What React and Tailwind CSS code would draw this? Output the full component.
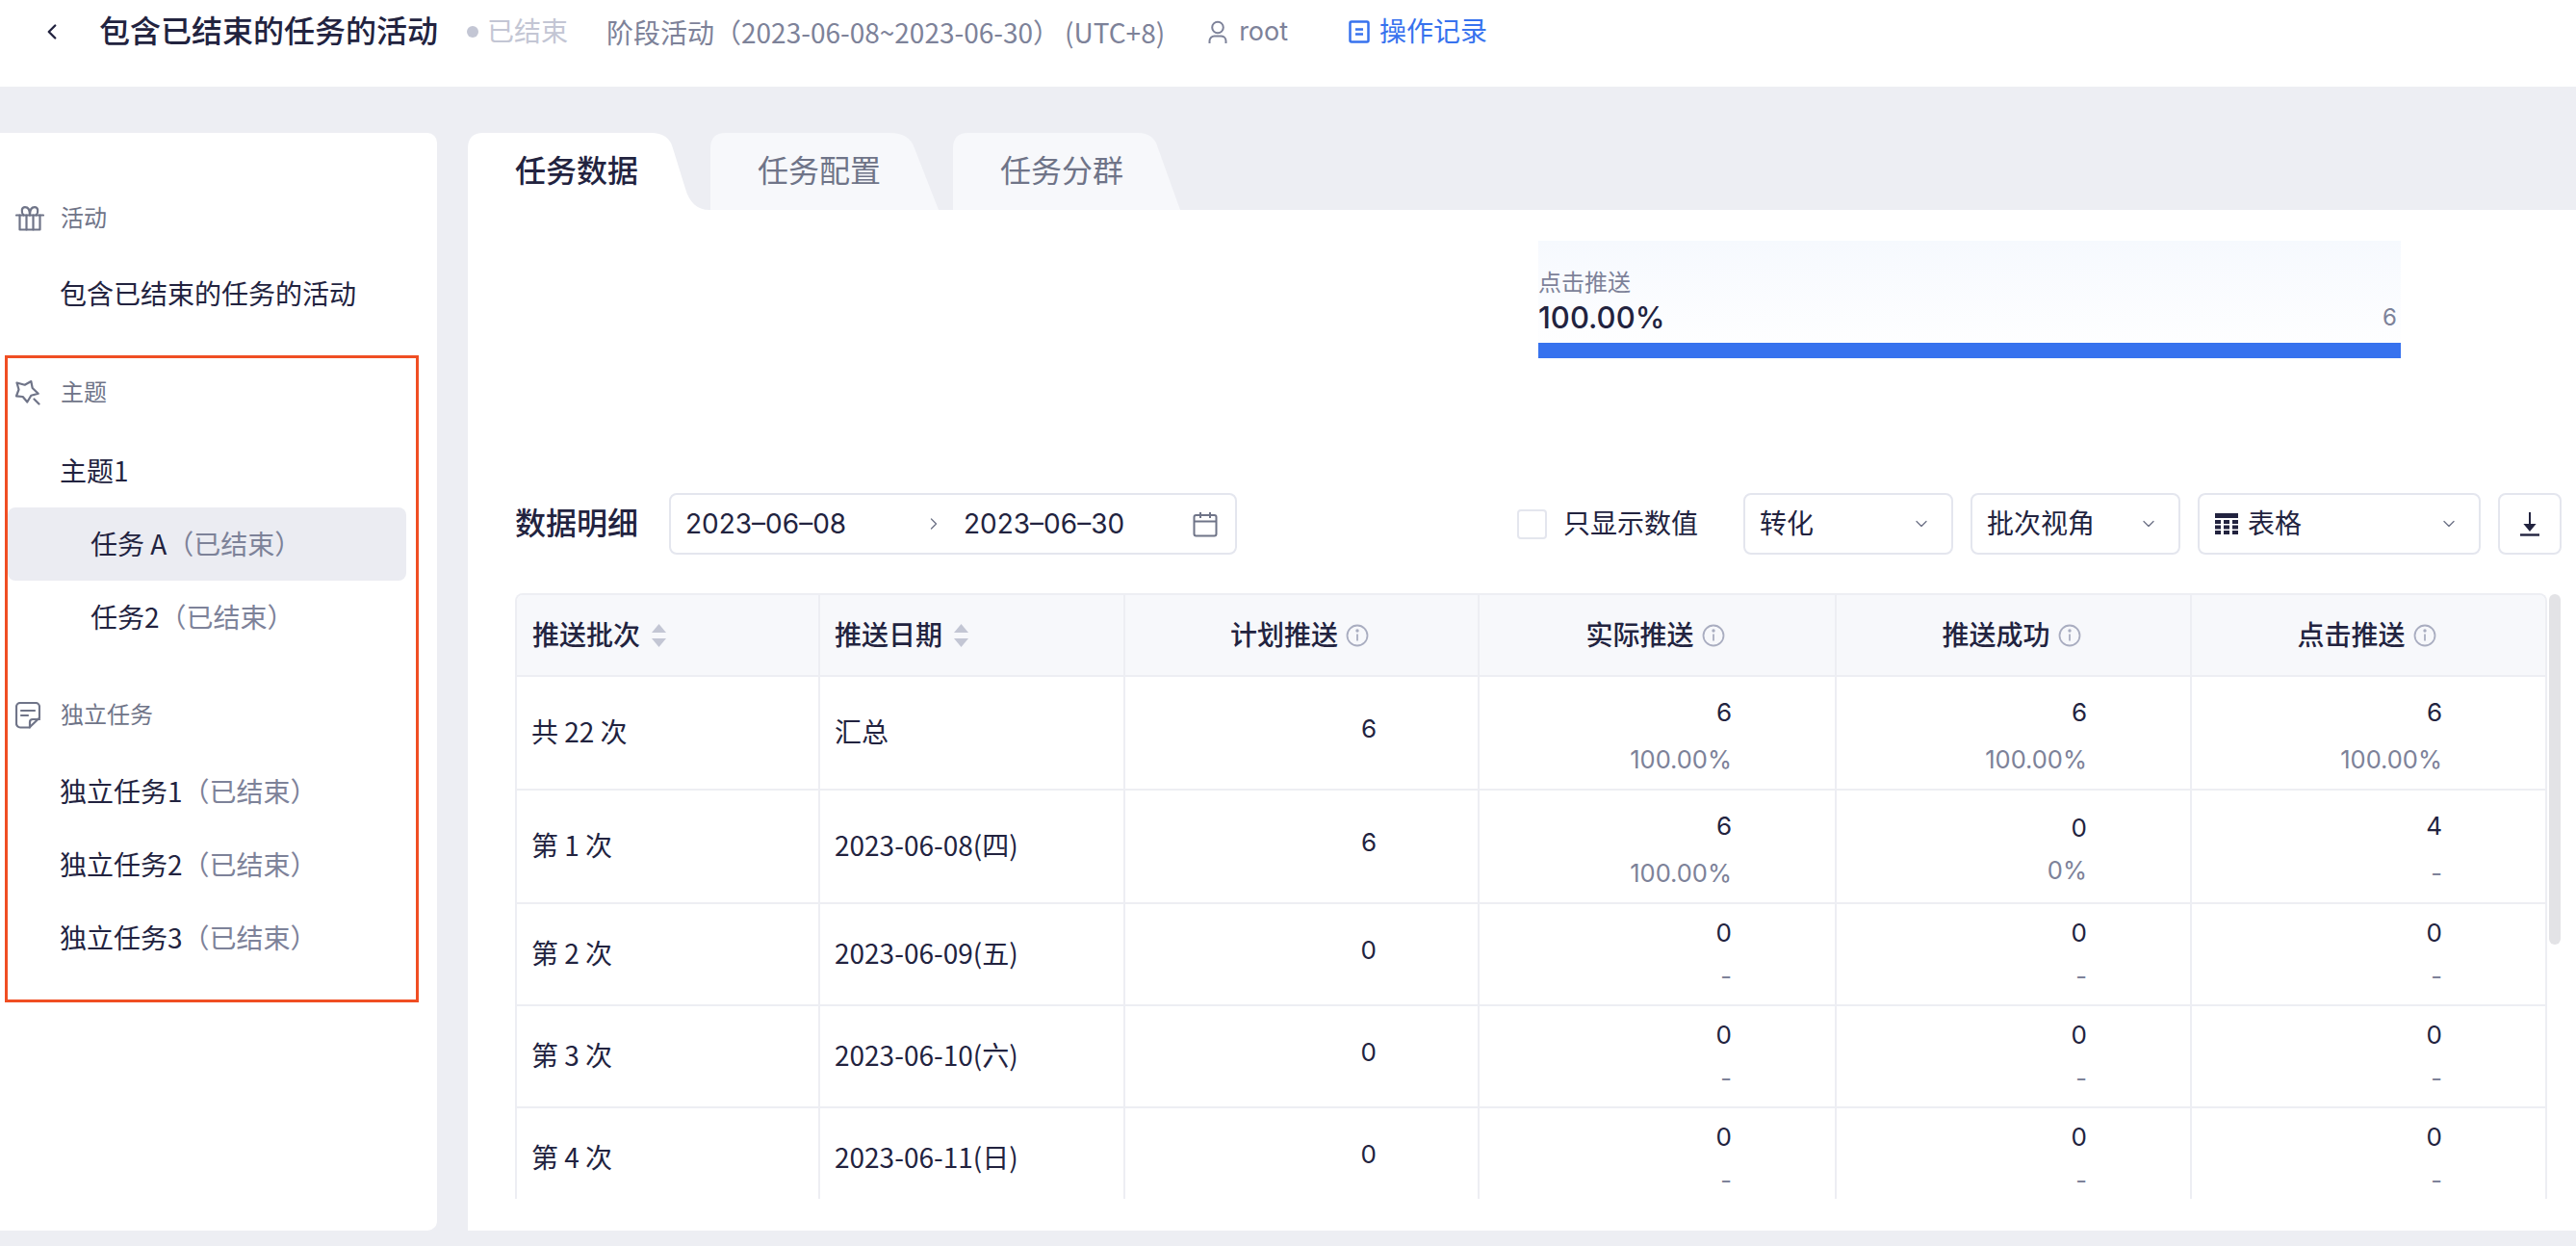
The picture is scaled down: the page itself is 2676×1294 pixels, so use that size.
import React from "react";
import { ChevronLeft, ChevronDown, ChevronRight } from "lucide-react";

const Info = () => (
  <svg width="24" height="24" viewBox="0 0 24 24" fill="none" stroke="#a9adc0" strokeWidth="1.800" className="ml-[8px] shrink-0">
    <circle cx="12" cy="12" r="10.500" />
    <path d="M12 10.500v7" />
    <circle cx="12" cy="7" r="0.800" fill="#a9adc0" />
  </svg>
);

const Sort = () => (
  <svg width="17" height="28" viewBox="0 0 17 28" fill="#c3c6d4" className="ml-[11px] shrink-0">
    <path d="M8.5 2l7.5 9H1z" />
    <path d="M8.5 26L1 17h15z" />
  </svg>
);

const GiftIcon = () => (
  <svg width="30" height="26" viewBox="0 0 30 26" fill="none" stroke="#6f7488" strokeWidth="2.2" strokeLinejoin="round" strokeLinecap="round" className="shrink-0">
    <path d="M1 9.500h28" />
    <path d="M4.500 9.500V24.500h21V9.500" />
    <path d="M11.500 9.500V24.500M18.500 9.500V24.500" />
    <path d="M15 9.500C15 4 13 1.200 10 1.200 6.500 1.200 5.500 6 8.500 9.500" />
    <path d="M15 9.500C15 4 17 1.200 20 1.200 23.500 1.200 24.500 6 21.500 9.500" />
  </svg>
);

const StarIcon = () => (
  <svg width="26" height="26" viewBox="0 0 26 26" fill="none" stroke="#6f7488" strokeWidth="2.2" strokeLinejoin="round" strokeLinecap="round" className="shrink-0">
    <path d="M1.500 2.500L9.700 4.700 16.300 1 17.700 8 23.700 13.700 16.300 15.700 12.300 22.500 7.700 17 1 16.300 3.500 9.500z" />
    <path d="M19.500 19.500L24.500 24.500" />
  </svg>
);

const NoteIcon = () => (
  <svg width="26" height="28" viewBox="0 0 26 28" fill="none" stroke="#6f7488" strokeWidth="2.2" strokeLinejoin="round" strokeLinecap="round" className="shrink-0">
    <path d="M14.500 26.500H5a4 4 0 0 1-4-4V5a4 4 0 0 1 4-4H21a4 4 0 0 1 4 4V16.500z" />
    <path d="M15 26.500V21a3 3 0 0 1 3-3h7" />
    <path d="M6 9h14M6 14h7" />
  </svg>
);

const Heading = ({ icon, label, className = "" }) => (
  <div className={`h-[56px] flex items-center pl-[16px] text-[24px] text-[#6f7488] ${className}`}>
    <div className="w-[47px] flex items-center">{icon}</div>
    <span>{label}</span>
  </div>
);

const Item = ({ name, suffix, sub, active, className = "" }) => (
  <div className={`h-[76px] flex items-center pb-[3px] text-[28px] text-[#22233f] font-['Noto_Sans_CJK_SC',sans-serif] ${sub ? "ml-[8px] w-[414px] pl-[86px]" : "pl-[62px]"} ${active ? "bg-[#ebecf2] rounded-[8px]" : ""} ${className}`}>
    <span>{name}</span>
    {suffix && <span className="text-[#7d8299]">（已结束）</span>}
  </div>
);

const Tab = ({ width, label, active, d, className = "" }) => (
  <div className={`relative h-[80px] flex items-start ${className}`} style={{ width }}>
    <svg className="absolute inset-0" width={width} height="80" viewBox={`0 0 ${width} 80`}>
      <path d={d} fill={active ? "#ffffff" : "#f7f8fb"} />
    </svg>
    <span className={`relative mt-[20px] pl-[49px] text-[32px] leading-[40px] ${active ? "font-medium text-[#22233f]" : "text-[#6f7488]"}`}>{label}</span>
  </div>
);

const Select = ({ width, label, icon }) => (
  <div className="h-[64px] flex items-center border-2 border-[#e4e6ee] rounded-[8px] pl-[15px] pr-[21px] text-[28px] text-[#22233f]" style={{ width }}>
    {icon}
    <span className="flex-1">{label}</span>
    <ChevronDown size={20} strokeWidth={1.6} color="#6f7488" />
  </div>
);

const cols = "grid grid-cols-[313px_317px_368px_371px_369px_369px]";

const HeadCell = ({ label, sort, first }) => (
  <div className={`flex items-center text-[28px] font-medium text-[#22233f] ${first ? "" : "border-l-2 border-[#edeef3]"} ${sort ? (first ? "pl-[16px]" : "pl-[15px]") : "justify-center pr-[4px]"}`}>
    <span>{label}</span>
    {sort ? <Sort /> : <Info />}
  </div>
);

const Metric = ({ value, rate, tall, lift }) => (
  <div className={`flex flex-col items-end justify-center pr-[107px] border-l-2 border-[#edeef3] ${tall ? "pt-[6px]" : ""}`}>
    <span className="text-[26px] leading-[44px] text-[#22233f]">{value}</span>
    <span className={`text-[25.5px] leading-[44px] text-[#7d8299] ${tall ? (lift ? "mt-0" : "mt-[5px]") : "mt-[1px]"}`}>{rate}</span>
  </div>
);

const rows = [
  { h: "h-[118px]", a: "共 22 次", b: "汇总", plan: "6", c: ["6", "100.00%"], d: ["6", "100.00%"], e: ["6", "100.00%"], tall: true },
  { h: "h-[118px]", a: "第 1 次", b: "2023-06-08(四)", plan: "6", c: ["6", "100.00%"], d: ["0", "0%"], e: ["4", "-"], tall: true, lift: true },
  { h: "h-[106px]", a: "第 2 次", b: "2023-06-09(五)", plan: "0", c: ["0", "-"], d: ["0", "-"], e: ["0", "-"] },
  { h: "h-[106px]", a: "第 3 次", b: "2023-06-10(六)", plan: "0", c: ["0", "-"], d: ["0", "-"], e: ["0", "-"] },
  { h: "h-[106px]", a: "第 4 次", b: "2023-06-11(日)", plan: "0", c: ["0", "-"], d: ["0", "-"], e: ["0", "-"] },
];

export default function App() {
  return (
    <div className="relative w-[2676px] h-[1294px] overflow-hidden flex flex-col bg-[#edeef3] font-['Inter','Noto_Sans_CJK_SC',sans-serif]">
      {/* 顶栏 */}
      <header className="h-[90px] shrink-0 bg-white flex items-center pb-[24px] text-[28px] text-[#7d8299]">
        <ChevronLeft size={26} strokeWidth={2.2} color="#22233f" className="ml-[41px]" />
        <h1 className="ml-[36px] text-[32px] font-medium text-[#22233f]">包含已结束的任务的活动</h1>
        <span className="ml-[30px] w-[12px] h-[12px] rounded-full bg-[#c3c6d4]" />
        <span className="ml-[9px] text-[#c3c6d4]">已结束</span>
        <span className="ml-[40px] font-['Noto_Sans_CJK_SC',sans-serif]">阶段活动（2023-06-08~2023-06-30）</span>
        <span className="ml-[5px] font-['Noto_Sans_CJK_SC',sans-serif]">(UTC+8)</span>
        <svg width="20" height="24" viewBox="0 0 20 24" fill="none" stroke="#7d8299" strokeWidth="2" className="ml-[45px]">
          <circle cx="10" cy="7.500" r="5.800" />
          <path d="M1.500 24v-2.500a5 5 0 0 1 5-5h7a5 5 0 0 1 5 5V24" />
        </svg>
        <span className="ml-[12px] text-[27px]">root</span>
        <svg width="22" height="24" viewBox="0 0 22 24" fill="none" stroke="#3772ee" strokeWidth="2.500" className="ml-[63px]">
          <rect x="1.500" y="1.500" width="19" height="21" rx="1.500" />
          <path d="M7 9.500h8M7 14.500h8" />
        </svg>
        <span className="ml-[10px] text-[#3772ee]">操作记录</span>
      </header>

      <div className="flex-1 min-h-0 flex gap-[32px] pt-[48px] pb-[16px]">
        {/* 侧栏 */}
        <aside className="w-[454px] shrink-0 bg-white rounded-tr-[10px] rounded-br-[10px] pt-[61px]">
          <Heading label="活动" icon={<GiftIcon />} />
          <Item name="包含已结束的任务的活动" className="mt-[12px]" />
          <Heading label="主题" icon={<StarIcon />} className="mt-[37px]" />
          <Item name="主题1" className="mt-[15px]" />
          <Item name="任务 A" suffix sub active />
          <Item name="任务2" suffix sub />
          <Heading label="独立任务" icon={<NoteIcon />} className="mt-[36px]" />
          <Item name="独立任务1" suffix className="mt-[13px]" />
          <Item name="独立任务2" suffix />
          <Item name="独立任务3" suffix />
        </aside>

        {/* 主区 */}
        <main className="flex-1 min-w-0 flex flex-col">
          <div className="h-[80px] shrink-0 flex">
            <Tab active width={251} label="任务数据" d="M0 80V16Q0 0 16 0H190Q209 0 213 16L226 58C230 72 238 80 251 80Z" />
            <Tab width={237} label="任务配置" className="ml-[1px]" d="M0 80V16Q0 0 16 0H186Q207 0 212 16L237 80Z" />
            <Tab width={236} label="任务分群" className="ml-[15px]" d="M0 80V16Q0 0 16 0H192Q209 0 213 16L236 80Z" />
          </div>

          <div className="flex-1 min-h-0 bg-white pt-[32px] pl-[49px] pr-[15px]">
            <div className="ml-[1063px] w-[896px] h-[122px] flex flex-col justify-end bg-gradient-to-b from-[#f6f9fe] to-white">
              <div className="text-[24px] leading-[32px] text-[#7d8299]">点击推送</div>
              <div className="flex items-center justify-between pr-[4px]">
                <span className="text-[31px] leading-[40px] font-medium text-[#22233f]">100.00%</span>
                <span className="text-[24px] text-[#7d8299]">6</span>
              </div>
              <div className="h-[16px] mt-[6px] bg-[#3772ee]" />
            </div>

            {/* 工具栏 */}
            <div className="mt-[140px] flex items-center">
              <h2 className="text-[32px] font-medium text-[#22233f] w-[160px]">数据明细</h2>
              <div className="w-[590px] h-[64px] flex items-center border-2 border-[#e4e6ee] rounded-[8px] pl-[15px] pr-[18px] text-[28px] text-[#22233f]">
                <span className="w-[248px]">2023–06–08</span>
                <ChevronRight size={20} strokeWidth={1.6} color="#6f7488" />
                <span className="ml-[21px] flex-1">2023–06–30</span>
                <svg width="26" height="27" viewBox="0 0 26 27" fill="none" stroke="#6f7488" strokeWidth="2">
                  <rect x="1.500" y="4" width="23" height="21.500" rx="2" />
                  <path d="M1.500 10.500h23M8 1v6M18 1v6" />
                </svg>
              </div>
              <div className="ml-[291px] w-[31px] h-[31px] border-2 border-[#e4e6ee] rounded-[4px]" />
              <span className="ml-[17px] w-[187px] text-[28px] text-[#22233f]">只显示数值</span>
              <div className="flex gap-[18px]">
                <Select width={218} label="转化" />
                <Select width={218} label="批次视角" />
                <Select
                  width={294}
                  label="表格"
                  icon={
                    <svg width="24" height="22" viewBox="0 0 24 22" fill="#22233f" className="mr-[10px] ml-[1px] shrink-0">
                      <path d="M0 0h24v5H0zM0 7h6v4H0zM9 7h6v4H9zM18 7h6v4h-6zM0 12.500h6v4H0zM9 12.500h6v4H9zM18 12.500h6v4h-6zM0 18h6v4H0zM9 18h6v4H9zM18 18h6v4h-6z" />
                    </svg>
                  }
                />
                <div className="w-[66px] h-[64px] flex items-center justify-center border-2 border-[#e4e6ee] rounded-[8px]">
                  <svg width="22" height="26" viewBox="0 0 22 26" fill="none" stroke="#22233f" strokeWidth="2">
                    <path d="M11 1v17" />
                    <path d="M6.500 14h9L11 19.500z" fill="#22233f" />
                    <path d="M1 24.500h20" strokeWidth="2.400" />
                  </svg>
                </div>
              </div>
            </div>

            {/* 表格 */}
            <div className="mt-[40px] flex items-start gap-[2px]">
              <div className="w-[2107px] h-[627px] overflow-hidden border-l-2 border-r-2 border-t-2 border-[#edeef3] rounded-t-[8px] box-content">
                <div className={`${cols} h-[85px] bg-[#f7f8fb] border-b-2 border-[#edeef3]`}>
                  <HeadCell first sort label="推送批次" />
                  <HeadCell sort label="推送日期" />
                  <HeadCell label="计划推送" />
                  <HeadCell label="实际推送" />
                  <HeadCell label="推送成功" />
                  <HeadCell label="点击推送" />
                </div>
                {rows.map((r) => (
                  <div key={r.a} className={`${cols} ${r.h} border-b-2 border-[#edeef3] text-[26px] text-[#22233f]`}>
                    <div className="flex items-center pl-[15px] pb-[5px] text-[28px] font-['Noto_Sans_CJK_SC',sans-serif]">{r.a}</div>
                    <div className="flex items-center pl-[15px] pb-[5px] text-[28px] font-['Noto_Sans_CJK_SC',sans-serif] border-l-2 border-[#edeef3]">{r.b}</div>
                    <div className="flex items-center justify-end pr-[105px] pb-[9px] border-l-2 border-[#edeef3]">{r.plan}</div>
                    <Metric value={r.c[0]} rate={r.c[1]} tall={r.tall} />
                    <Metric value={r.d[0]} rate={r.d[1]} tall={r.tall} lift={r.lift} />
                    <Metric value={r.e[0]} rate={r.e[1]} tall={r.tall} />
                  </div>
                ))}
              </div>
              <div className="w-[12px] h-[364px] mt-[1px] bg-[#e3e3e6] rounded-full" />
            </div>
          </div>
        </main>
      </div>

      {/* 标注框 */}
      <div className="absolute left-[5px] top-[369px] w-[430px] h-[672px] border-[3px] border-[#f04e23] pointer-events-none" />
    </div>
  );
}
